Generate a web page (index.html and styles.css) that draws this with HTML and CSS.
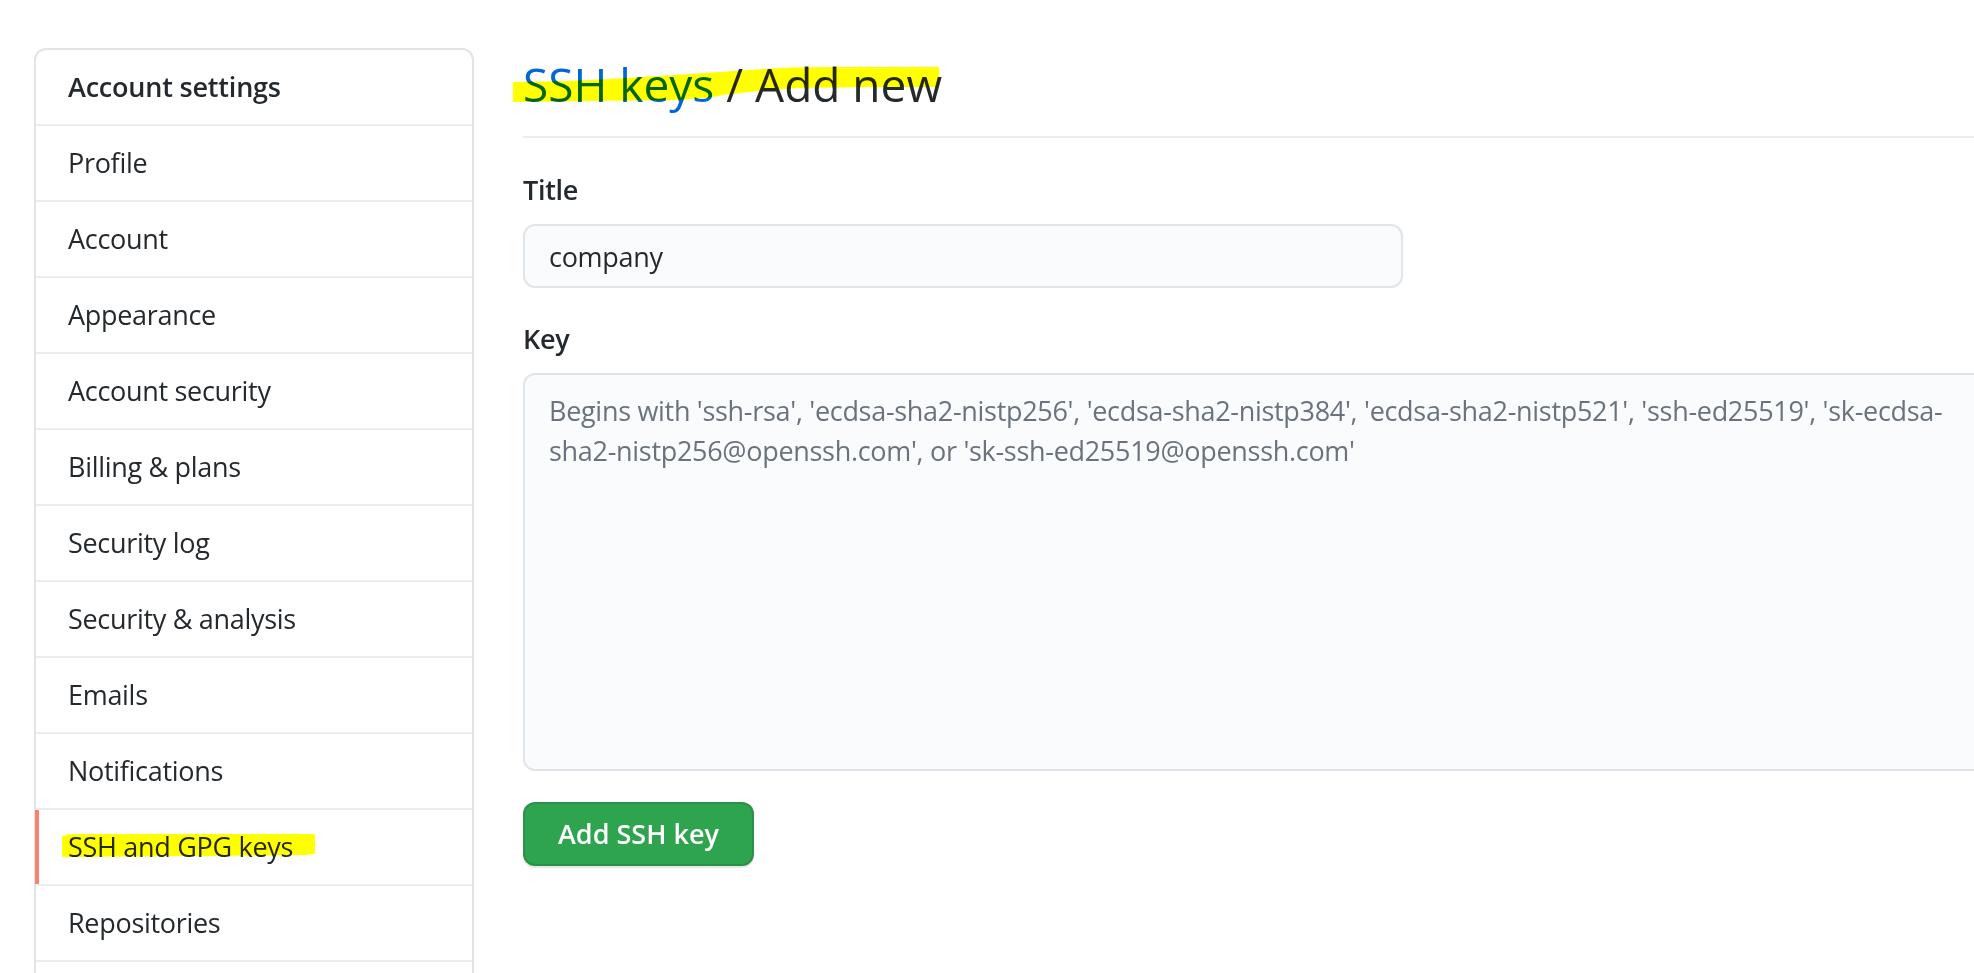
FILE: index.html
```html
<!DOCTYPE html>
<html lang="en">
<head>
<meta charset="utf-8">
<title>SSH keys / Add new</title>
<link rel="stylesheet" href="styles.css">
</head>
<body>
<div class="page">
  <nav class="menu">
    <div class="menu-heading">Account settings</div>
    <a class="menu-item" href="#">Profile</a>
    <a class="menu-item" href="#">Account</a>
    <a class="menu-item" href="#">Appearance</a>
    <a class="menu-item" href="#">Account security</a>
    <a class="menu-item" href="#">Billing &amp; plans</a>
    <a class="menu-item" href="#">Security log</a>
    <a class="menu-item" href="#">Security &amp; analysis</a>
    <a class="menu-item" href="#">Emails</a>
    <a class="menu-item" href="#">Notifications</a>
    <a class="menu-item selected" href="#">SSH and GPG keys<svg class="marker marker-side" viewBox="62 833 254 25" width="254" height="25" aria-hidden="true"><polygon points="62,836 72,834 315,834 315,854 305,855 62,857" fill="#ffff00"/></svg></a>
    <a class="menu-item" href="#">Repositories</a>
    <div class="menu-filler" aria-hidden="true"></div>
  </nav>
  <main class="main">
    <div class="subhead">
      <h2 class="subhead-heading"><a class="crumb" href="#">SSH keys</a> / Add new<svg class="marker marker-head" viewBox="513 67 426 35" width="426" height="35" aria-hidden="true"><path d="M513,82 L567,81 L610,79 L673,75 L720,72 L763,69 L790,67.5 L833,67 L939,67 L939,87 L867,87 L800,88 L767,90 L723,95 L707,98 L673,100 L513,102 Z" fill="#ffff00"/></svg></h2>
    </div>
    <form class="form">
      <div class="form-group">
        <label class="label" for="title">Title</label>
        <input class="input" id="title" type="text" value="company">
      </div>
      <div class="form-group">
        <label class="label" for="key">Key</label>
        <textarea class="textarea" id="key" placeholder="Begins with 'ssh-rsa', 'ecdsa-sha2-nistp256', 'ecdsa-sha2-nistp384', 'ecdsa-sha2-nistp521', 'ssh-ed25519', 'sk-ecdsa-&#10;sha2-nistp256@openssh.com', or 'sk-ssh-ed25519@openssh.com'"></textarea>
      </div>
      <button class="btn-primary" type="button">Add SSH key</button>
    </form>
  </main>
</div>
</body>
</html>
```

FILE: styles.css
```css
html, body {
  margin: 0;
  padding: 0;
  background: #ffffff;
  overflow: hidden;
}

body {
  font-family: "Open Sans", "Noto Sans", "Liberation Sans", sans-serif;
  font-size: 27px;
  line-height: 42px;
  color: #24292e;
  letter-spacing: -0.3px;
}

.page {
  display: flex;
  align-items: flex-start;
  padding: 48px 0 0 34px;
  width: 2200px;
}

/* Sidebar menu */
.menu {
  flex: 0 0 440px;
  box-sizing: border-box;
  display: flex;
  flex-direction: column;
  border: 2px solid #e1e4e8;
  border-radius: 12px;
  background: #ffffff;
}

.menu-heading {
  padding: 16px 32px;
  font-weight: 600;
  letter-spacing: -0.2px;
  border-bottom: 2px solid #eaecef;
}

.menu-item {
  position: relative;
  display: block;
  padding: 16px 32px;
  color: #24292e;
  text-decoration: none;
  border-bottom: 2px solid #eaecef;
}

.menu-filler {
  height: 74px;
}

.menu-item.selected::before {
  content: "";
  position: absolute;
  left: -1px;
  top: 0;
  bottom: 0;
  width: 4px;
  background: #f9826c;
}

/* highlighter marks */
.marker {
  position: absolute;
  pointer-events: none;
  mix-blend-mode: multiply;
}

.marker-side {
  left: 26px;
  top: 23px;
}

.marker-head {
  left: -10px;
  top: 19px;
}

/* Main column */
.main {
  flex: 0 0 1500px;
  margin-left: 49px;
}

.subhead {
  padding-bottom: 16px;
  border-bottom: 2px solid #eaecef;
}

.subhead-heading {
  position: relative;
  margin: 0;
  font-size: 46px;
  line-height: 72px;
  font-weight: 400;
  letter-spacing: 0;
  color: #24292e;
}

.crumb {
  color: #0366d6;
  text-decoration: none;
}

.form {
  padding-top: 31px;
}

.form-group {
  display: flex;
  flex-direction: column;
  align-items: flex-start;
  margin-bottom: 30px;
}

.label {
  font-weight: 600;
  line-height: 42px;
  margin-bottom: 13px;
}

.input,
.textarea {
  box-sizing: border-box;
  font-family: inherit;
  font-size: 27px;
  letter-spacing: -0.3px;
  line-height: 40px;
  color: #24292e;
  background: #fafbfc;
  border: 2px solid #e1e4e8;
  border-radius: 12px;
  outline: none;
  margin: 0;
}

.input {
  width: 880px;
  height: 64px;
  padding: 10px 24px;
}

.textarea {
  width: 100%;
  height: 398px;
  padding: 16px 24px;
  resize: none;
  overflow: hidden;
}

.textarea::placeholder {
  color: #6a737d;
  opacity: 1;
}

.btn-primary {
  margin-top: 1px;
  box-sizing: border-box;
  height: 64px;
  padding: 10px 33px;
  font-family: inherit;
  font-size: 27px;
  font-weight: 600;
  letter-spacing: 0;
  line-height: 40px;
  color: #ffffff;
  background: #2ea44f;
  border: 2px solid rgba(27, 31, 35, 0.15);
  border-radius: 12px;
  box-shadow: 0 2px 0 rgba(27, 31, 35, 0.1);
  cursor: pointer;
}
```
